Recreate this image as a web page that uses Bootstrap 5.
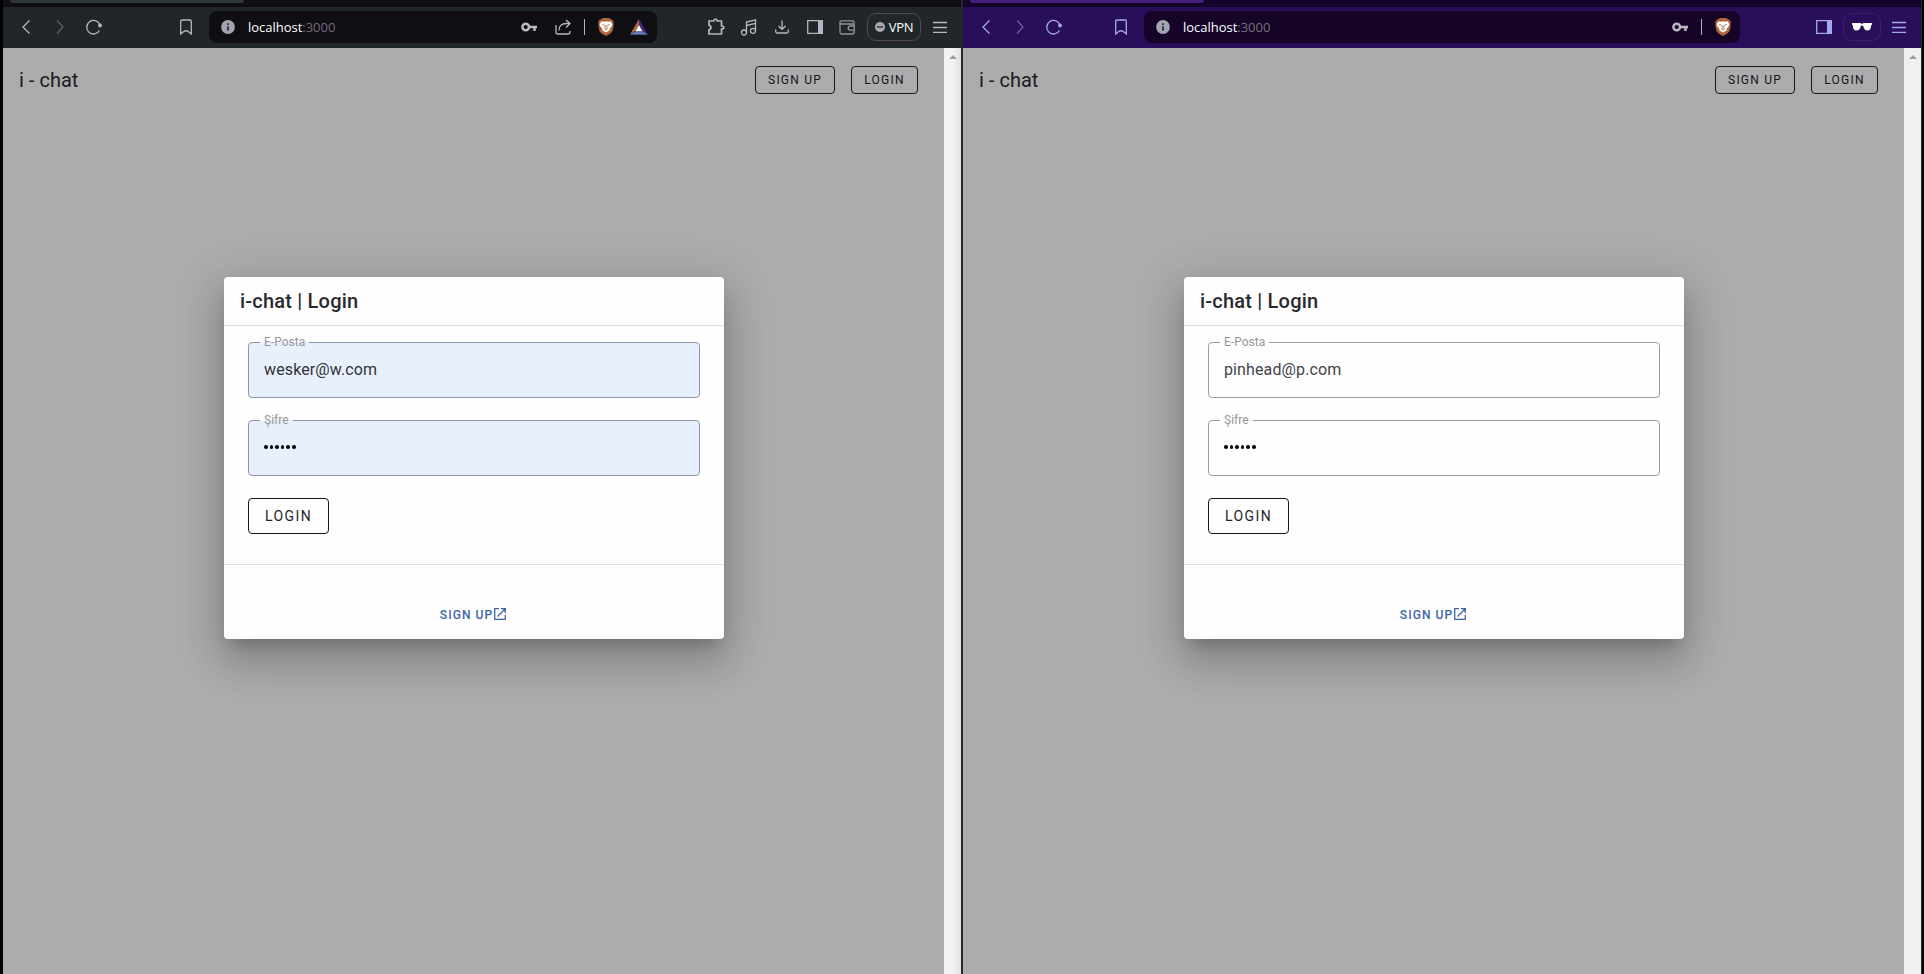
<!DOCTYPE html>
<html lang="en">
<head>
<meta charset="utf-8">
<title>i-chat</title>
<link href="https://cdn.jsdelivr.net/npm/bootstrap@5.3.0/dist/css/bootstrap.min.css" rel="stylesheet">
<style>
html,body{height:974px;overflow:hidden}
body{background:#000;font-family:Roboto,"Liberation Sans",sans-serif;padding:0 3px}
.win{width:960px;flex:none;--tabs:#0f0f14;--tab:#2d383b;--tool:#212629;--addr:#0e0e13;--ic:#b4b7c4;--dim:#655d66;--pill:#544657;--port:#75697b;--edge:#26282b}
.win.private{width:959px;border-right:1px solid #26282b;--tabs:#15042a;--tab:#40207a;--tool:#290e5b;--addr:#150428;--ic:#a4a9ee;--dim:#6c5ca2;--pill:#3d1d70;--port:#77717f}
.win.regular{border-right:2px solid var(--edge)}
.tabs{height:7px;background:var(--tabs);padding-left:7px}
.tabs i{width:234px;height:3px;background:var(--tab);border-radius:0 0 6px 6px}
.tool{height:41px;background:var(--tool);color:var(--ic);padding:0 0 1px 6px}
.tool svg{flex:none;display:block;fill:none;stroke:currentColor;stroke-width:1.3}
.cell{width:34px;height:32px;flex:none;display:flex;align-items:center;justify-content:center}
.cell.narrow{width:33px}
.fwd{color:var(--dim)}
.addr{height:32px;border-radius:8px;background:var(--addr)}
.regular .addr{width:448px;margin-left:6px}
.private .addr{width:596px;margin-left:6px}
.regular .mark-btn{margin-left:58px}
.private .mark-btn{margin-left:33px}
.regular .addr-end{padding-right:1px}
.private .addr-end{padding-right:1px}
.tool-end{margin-left:42px}
.private .tool-end{margin-left:67px}
.url{font:13px/18px "Open Sans","Noto Sans",sans-serif;color:#fff;margin-left:5px;letter-spacing:-.02px}
.url span{color:var(--port)}
.sep{width:1px;height:16px;background:#b5b3ba}
.pill{height:28px;border:1px solid var(--pill);border-radius:9px}
.vpn{width:54px;margin-left:3px;font:13px/18px "Open Sans","Noto Sans",sans-serif;color:#fff;letter-spacing:-.3px}
.glasses{width:38px;margin:0 1px 0 2px}
.view{height:926px}
.page{width:941px;background:#acacac;color:#1c1921}
.bar{height:64px;padding:0 26px 0 16px}
.brand{font-size:20px;letter-spacing:.02px;line-height:32px}
.vbtn{border:1px solid #18181c;border-radius:4px;background:none;font-weight:400;text-transform:uppercase;color:#16121c;padding:0}
.vbtn.sm{height:28px;font-size:12px;letter-spacing:1.2px}
.vbtn.signup{width:80px}
.vbtn.login{width:67px}
.vbtn.lg{height:36px;width:81px;font-size:14px;letter-spacing:1.4px;color:#26252b;padding-top:1px}
.dlg{width:500px;height:362px;margin:165px 0 0 221px;background:#fefefe;border-radius:4px;box-shadow:0 11px 15px -7px rgba(0,0,0,.2),0 24px 38px 3px rgba(0,0,0,.14),0 9px 46px 8px rgba(0,0,0,.12)}
.dlg-title{height:49px;padding:0 16px;border-bottom:1px solid #e0e0e0;font-size:20px;font-weight:500;line-height:48px;letter-spacing:.2px;color:#2a292e}
.dlg-body{height:239px;padding:16px 24px 0;border-bottom:1px solid #e0e0e0}
.field{height:56px;border:1px solid #9b9b9b;border-radius:4px;margin-bottom:22px;position:relative;padding:0 15px;color:#444348}
.regular .field{background:#e8f0fe;border-color:#8f96a6;color:#333238}
.field label{position:absolute;left:11px;top:-10px;padding:0 4px;font-size:12px;line-height:18px;letter-spacing:.03px;color:#96969a}
.field label:before{content:"";position:absolute;left:0;right:0;top:9px;height:1px;background:#fefefe}
.regular .field label:before{background:#eef3fe}
.field label span{position:relative}
.field .val{font-size:16px;line-height:24px;padding-top:15px;letter-spacing:.12px}
.dots{display:flex;gap:2px;padding-top:24px}
.dots b{width:3.6px;height:3.6px;border-radius:50%;background:#0b0b0e}
.dlg-foot{padding:41px 1px 0 0;height:73px;font-size:12px;font-weight:500;letter-spacing:1.07px;color:#3c66ab;line-height:18px}
.dlg-foot svg{margin-top:1px}
.scroll{width:17px;background:#f0f0f0;padding-top:7px}
.regular .scroll{background:linear-gradient(90deg,#f3f3f3 50%,#e0e0e0)}
.scroll i{width:0;height:0;border:4px solid transparent;border-top:0;border-bottom-color:#a0a0a0}
</style>
</head>
<body>
<svg width="0" height="0" class="d-none">
<symbol id="back" viewBox="0 0 16 16"><path d="M11.500 1.500 5 8l6.500 6.500"/></symbol>
<symbol id="next" viewBox="0 0 16 16"><path d="M5 1.500 11 8l-6 6.500"/></symbol>
<symbol id="reload" viewBox="0 0 18 18"><path d="M14.800 6.500A6.800 6.800 0 1 0 14.500 12.500"/><circle cx="15" cy="7.500" r="1.900" fill="currentColor" stroke="none"/></symbol>
<symbol id="bookmark" viewBox="0 0 14 16"><path d="M1.700 2.300Q1.700 1 3 1h8q1.300 0 1.300 1.300v12.700L9.300 12.500Q7 11 4.700 12.500L1.700 15z"/></symbol>
<symbol id="info" viewBox="0 0 14 14"><circle cx="7" cy="7" r="6.900" fill="#a2a5b0" stroke="none"/><path d="M7 6.200V10.500M7 3.300v1.700" stroke="#24222a" stroke-width="1.700"/></symbol>
<symbol id="key" viewBox="0 0 16 10"><circle cx="4.700" cy="5" r="3.300" stroke="#bcbac0" stroke-width="2.500"/><path d="M8 5h8M13.500 5v4" stroke="#bcbac0" stroke-width="2.500"/></symbol>
<symbol id="share" viewBox="0 0 16 16"><path d="M1 6v7q0 2 2 2h10q2 0 2-2v-1"/><path d="M4 11.500c0-4.500 3-7 7-7h3.500M11 1l4 3.500L11 8.500"/></symbol>
<symbol id="lion" viewBox="0 0 16 18"><path fill="#ae653a" stroke="none" d="M4.500 0h7L13 1.600l1.600.2L16 4.500l-.7 1.200.4 1.800-1.300 6Q12.500 16 8 18 3.500 16 1.600 13.500L.3 7.500l.4-1.800L0 4.500l1.400-2.700L3 1.600z"/><path fill="#fff" stroke="none" d="M3.500 3.300 6 3.800l2-.5 2 .5 2.500-.5 2 3-1 2.500-2 2.200.4 1.300L8 14.500 4.100 12.300l.4-1.300-2-2.200-1-2.500z"/><path d="m4.300 6.500 2.400.8M11.700 6.500l-2.400.8M7.200 7.500v2L6.700 11 8 12l1.300-1-.5-1.500v-2" stroke="#9a5730" stroke-width=".8"/></symbol>
<symbol id="prism" viewBox="0 0 18 16"><g stroke="none"><path fill="#ae653a" d="M9 0 0 15.500 6 11.500 9 6z"/><path fill="#4a207d" d="m9 0 9 15.500-6-4L9 6z"/><path fill="#5f78ae" d="M0 15.700h18l-6-4H6z"/><path fill="#fff" d="m9 6 3.400 6H5.600z"/></g></symbol>
<symbol id="puzzle" viewBox="0 0 18 18"><path stroke-width="1.700" d="M2 3h4.700Q7 1.200 8.500 1.200T10.300 3H14.500v5Q16.800 8 16.800 9.500T14.500 11.200V16H2v-4.300q2-.3 2-2.200T2 7.300z"/></symbol>
<symbol id="music" viewBox="0 0 18 18"><circle cx="4" cy="14.500" r="2.500"/><circle cx="13" cy="12.800" r="2.500"/><path d="M6.500 14.500V4L15.500 1.800v11M6.500 7.500 15.500 5.300"/></symbol>
<symbol id="down" viewBox="0 0 14 14"><path d="M7 .5v8.500M3.500 6 7 9.300 10.500 6M.7 9.500v2Q.7 13 2.200 13h9.600q1.500 0 1.500-1.500v-2"/></symbol>
<symbol id="side" viewBox="0 0 16 14"><path d="M.7.7h14.600v12.600H.7z"/><path d="M11 0h5v14h-5z" fill="currentColor" stroke="none"/></symbol>
<symbol id="wallet" viewBox="0 0 17 15"><path opacity=".75" d="M15 4V2.200Q15 .8 13.500.8H2.500Q1 .8 1 2.300v10Q1 14 2.500 14h11q1.800 0 1.800-1.700V5.700Q15.300 4 13.500 4H1M15.500 6h-4q-2.300 0-2.300 2t2.300 2.200h4"/></symbol>
<symbol id="menu" viewBox="0 0 14 12"><path d="M0 1.500h14M0 6.500h14M0 11.300h14"/></symbol>
<symbol id="shades" viewBox="0 0 20 8"><path fill="#fff" stroke="none" d="M0 0h8.500l1 .8h1l1-.8H20v1.600l-.8.700Q18.800 7.500 15.500 7.500T11.200 3L10.500 2.400h-1L8.800 3Q8 7.500 4.500 7.500T.8 2.300L0 1.600z"/></symbol>
<symbol id="open" viewBox="0 0 14 14"><path d="M6 1.700H1.700v10.600h10.600V8M8 1.700h4.300V6M12.300 1.700 4.500 9.500"/></symbol>
</svg>
<div class="d-flex">
<section class="win regular">
  <div class="tabs d-flex"><i></i></div>
  <div class="tool d-flex align-items-center">
    <div class="cell"><svg width="16" height="16"><use href="#back"/></svg></div>
    <div class="cell fwd"><svg width="16" height="16"><use href="#next"/></svg></div>
    <div class="cell"><svg width="18" height="18"><use href="#reload"/></svg></div>
    <div class="cell mark-btn"><svg width="14" height="16"><use href="#bookmark"/></svg></div>
    <div class="addr d-flex align-items-center">
      <div class="cell ps-1"><svg width="14" height="14"><use href="#info"/></svg></div>
      <div class="url">localhost<span>:3000</span></div>
      <div class="addr-end d-flex align-items-center ms-auto">
        <div class="cell"><svg width="16" height="10"><use href="#key"/></svg></div>
        <div class="cell"><svg width="16" height="16"><use href="#share"/></svg></div>
        <div class="sep ms-1"></div>
        <div class="cell ms-1 narrow"><svg width="16" height="18"><use href="#lion"/></svg></div>
        <div class="cell"><svg width="18" height="16"><use href="#prism"/></svg></div>
      </div>
    </div>
    <div class="tool-end d-flex align-items-center">
      <div class="cell narrow"><svg width="18" height="18"><use href="#puzzle"/></svg></div>
      <div class="cell narrow"><svg width="18" height="18"><use href="#music"/></svg></div>
      <div class="cell narrow"><svg width="14" height="14"><use href="#down"/></svg></div>
      <div class="cell narrow"><svg width="16" height="14"><use href="#side"/></svg></div>
      <div class="cell narrow"><svg width="17" height="15"><use href="#wallet"/></svg></div>
      <div class="pill vpn d-flex align-items-center justify-content-center gap-1"><svg width="10" height="10" viewBox="0 0 10 10"><circle cx="5" cy="5" r="5" fill="#a5a7b2" stroke="none"/><path d="M2 5h6" stroke="#212629"/></svg>VPN</div>
      <div class="cell ps-1"><svg width="14" height="12"><use href="#menu"/></svg></div>
    </div>
  </div>
  <div class="view d-flex">
    <main class="page">
      <div class="bar d-flex align-items-center"><div class="brand me-auto">i - chat</div><button class="vbtn sm signup me-3">Sign up</button><button class="vbtn sm login">Login</button></div>
      <div class="dlg">
        <div class="dlg-title">i-chat | Login</div>
        <div class="dlg-body">
          <div class="field"><label><span>E-Posta</span></label><div class="val">wesker@w.com</div></div>
          <div class="field"><label><span>Şifre</span></label><div class="dots"><b></b><b></b><b></b><b></b><b></b><b></b></div></div>
          <button class="vbtn lg">Login</button>
        </div>
        <div class="dlg-foot d-flex justify-content-center">SIGN UP<svg width="14" height="14" fill="none" stroke="currentColor" stroke-width="1.300"><use href="#open"/></svg></div>
      </div>
    </main>
    <div class="scroll d-flex justify-content-center"><i></i></div>
  </div>
</section>
<section class="win private">
  <div class="tabs d-flex"><i></i></div>
  <div class="tool d-flex align-items-center">
    <div class="cell"><svg width="16" height="16"><use href="#back"/></svg></div>
    <div class="cell fwd"><svg width="16" height="16"><use href="#next"/></svg></div>
    <div class="cell"><svg width="18" height="18"><use href="#reload"/></svg></div>
    <div class="cell mark-btn"><svg width="14" height="16"><use href="#bookmark"/></svg></div>
    <div class="addr d-flex align-items-center">
      <div class="cell ps-1"><svg width="14" height="14"><use href="#info"/></svg></div>
      <div class="url">localhost<span>:3000</span></div>
      <div class="addr-end d-flex align-items-center ms-auto">
        <div class="cell me-1"><svg width="16" height="10"><use href="#key"/></svg></div>
        <div class="sep"></div>
        <div class="cell narrow ms-1"><svg width="16" height="18"><use href="#lion"/></svg></div>
      </div>
    </div>
    <div class="tool-end d-flex align-items-center">
      <div class="cell"><svg width="16" height="14"><use href="#side"/></svg></div>
      <div class="pill glasses d-flex align-items-center justify-content-center"><svg width="20" height="8"><use href="#shades"/></svg></div>
      <div class="cell"><svg width="14" height="12"><use href="#menu"/></svg></div>
    </div>
  </div>
  <div class="view d-flex">
    <main class="page">
      <div class="bar d-flex align-items-center"><div class="brand me-auto">i - chat</div><button class="vbtn sm signup me-3">Sign up</button><button class="vbtn sm login">Login</button></div>
      <div class="dlg">
        <div class="dlg-title">i-chat | Login</div>
        <div class="dlg-body">
          <div class="field"><label><span>E-Posta</span></label><div class="val">pinhead@p.com</div></div>
          <div class="field"><label><span>Şifre</span></label><div class="dots"><b></b><b></b><b></b><b></b><b></b><b></b></div></div>
          <button class="vbtn lg">Login</button>
        </div>
        <div class="dlg-foot d-flex justify-content-center">SIGN UP<svg width="14" height="14" fill="none" stroke="currentColor" stroke-width="1.300"><use href="#open"/></svg></div>
      </div>
    </main>
    <div class="scroll d-flex justify-content-center"><i></i></div>
  </div>
</section>
</div>
<script src="https://cdn.jsdelivr.net/npm/bootstrap@5.3.0/dist/js/bootstrap.bundle.min.js"></script>
</body>
</html>
